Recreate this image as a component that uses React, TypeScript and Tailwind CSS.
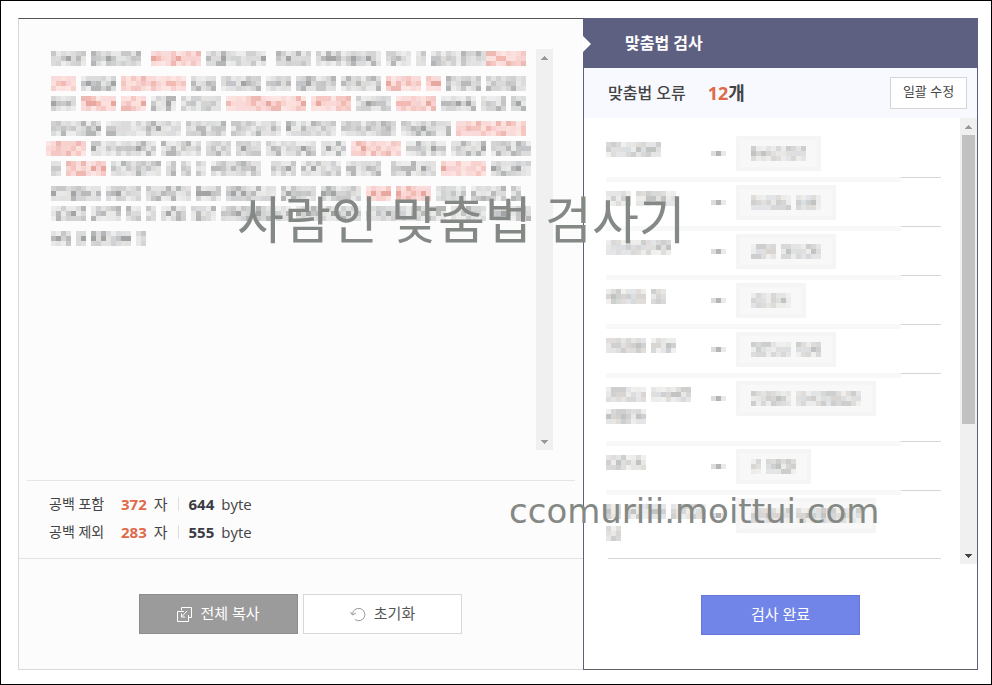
type Run = [start: number, end: number, tone?: "red"]

const CELL = 5

const grays = ["#d9dad9", "#c9cac9", "#e4e4e3", "#b9bab9", "#d2d3d5", "#a3a4a4", "#dedcda", "#c3c5c8", "#e9e9e8"]
const softGrays = ["#e0e0df", "#cfd0d0", "#e8e8e6", "#c2c3c3", "#dcdfe2", "#d8d5d2", "#ececeb"]
const reds = ["#f8d3cf", "#f5c6c1", "#fbe0dc", "#f3bab4", "#f8d2d2", "#e8a79f", "#fbd9d6"]

// top of each censored line and its words, in pixels inside the editor
const editorLines: { y: number; runs: Run[] }[] = [
  {
    y: 5,
    runs: [[5, 40], [45, 95], [105, 155, "red"], [160, 220], [230, 265], [270, 335], [340, 365], [370, 380], [385, 440], [440, 480, "red"]],
  },
  {
    y: 30,
    runs: [[5, 30, "red"], [35, 70], [75, 140, "red"], [145, 170], [175, 215], [220, 245], [250, 290], [295, 335], [340, 375, "red"], [380, 395, "red"], [400, 435], [440, 480]],
  },
  {
    y: 50,
    runs: [[5, 30], [35, 70, "red"], [75, 100, "red"], [105, 130], [135, 175], [180, 260, "red"], [265, 305, "red"], [310, 345], [350, 390, "red"], [395, 430], [435, 460], [465, 480]],
  },
  {
    y: 75,
    runs: [[5, 55], [60, 135], [140, 180], [185, 235], [240, 290], [295, 350], [355, 405], [410, 480, "red"]],
  },
  {
    y: 95,
    runs: [[0, 40, "red"], [45, 110], [115, 155], [160, 185], [190, 215], [220, 270], [275, 300], [305, 355, "red"], [360, 400], [405, 440], [445, 485]],
  },
  {
    y: 115,
    runs: [[5, 15], [20, 60, "red"], [65, 115], [120, 130], [135, 145], [150, 160], [165, 215], [225, 250], [255, 295], [300, 335], [345, 390], [395, 440, "red"], [445, 485]],
  },
  {
    y: 140,
    runs: [[5, 55], [60, 95], [100, 145], [150, 175], [180, 230], [235, 270], [275, 315], [320, 345, "red"], [350, 385, "red"], [390, 420], [425, 460], [465, 475]],
  },
  {
    y: 160,
    runs: [[5, 40], [45, 75], [80, 95], [100, 110], [115, 140], [145, 170], [175, 245], [250, 315], [320, 400], [405, 440], [445, 485]],
  },
  { y: 185, runs: [[5, 25], [30, 40], [45, 85], [90, 100]] },
]

type ErrorRow = { label: Run[][]; pill: number; fix: Run[] }

const errorRows: ErrorRow[] = [
  { label: [[[0, 55]]], pill: 85, fix: [[0, 55]] },
  { label: [[[0, 25], [30, 70]]], pill: 100, fix: [[0, 40], [45, 70]] },
  { label: [[[0, 65]]], pill: 100, fix: [[0, 25], [30, 70]] },
  { label: [[[0, 40], [45, 60]]], pill: 70, fix: [[0, 40]] },
  { label: [[[0, 40], [45, 70]]], pill: 100, fix: [[0, 40], [45, 70]] },
  { label: [[[0, 40], [45, 85]], [[0, 40]]], pill: 140, fix: [[0, 40], [45, 110]] },
  { label: [[[0, 40]]], pill: 75, fix: [[0, 10], [15, 45]] },
  { label: [[[0, 15], [20, 60], [65, 100]], [[0, 15]]], pill: 140, fix: [[0, 40], [45, 110]] },
]

const noise = (x: number, y: number) => {
  const n = Math.sin(x * 12.9898 + y * 78.233) * 43758.5453
  return n - Math.floor(n)
}

function Mosaic({ runs, y, soft, seed = 0 }: { runs: Run[]; y: number; soft?: boolean; seed?: number }) {
  return (
    <g>
      {runs.flatMap(([start, end, tone]) => {
        const palette = tone === "red" ? reds : soft ? softGrays : grays
        const cells = []
        for (let x = start; x < end; x += CELL) {
          for (let row = 0; row < 3; row++) {
            const pick = Math.floor(noise(x + seed, y + row * 7) * palette.length)
            cells.push(
              <rect
                key={`${x}-${row}`}
                x={x}
                y={y + row * CELL}
                width={CELL}
                height={CELL}
                fill={palette[pick]}
                opacity={row === 1 ? 1 : 0.8}
              />
            )
          }
        }
        return cells
      })}
    </g>
  )
}

function Arrow({ down, className }: { down?: boolean; className: string }) {
  return (
    <svg width="17" height="17" viewBox="0 0 17 17" className={className} shapeRendering="crispEdges">
      <path d={down ? "M5 7h7L8.5 11z" : "M5 11h7L8.5 7z"} fill="currentColor" />
    </svg>
  )
}

function CopyIcon() {
  return (
    <svg width="15" height="15" viewBox="0 0 15 15" fill="none" stroke="currentColor">
      <path d="M4.500 3.500V0.500H14.500V10.500H11.500" />
      <path d="M7 4.500H0.500V14.500H11.500V8" />
      <path d="M10 4L5 9.500M4.500 6.500V10H8" />
    </svg>
  )
}

function ResetIcon() {
  return (
    <svg width="16" height="15" viewBox="0 0 16 15" fill="none" stroke="currentColor">
      <path d="M2.500 7.500A6.200 6.200 0 1 1 5 12.500" />
      <path d="M0.500 5L2.500 8L6 6" />
    </svg>
  )
}

function Count({ label, chars, bytes }: { label: string; chars: number; bytes: number }) {
  return (
    <div className="flex h-7 items-center text-[15px] text-[#444]">
      <span className="w-[72px] text-sm">{label}</span>
      <strong className="font-bold text-[#e0694a]">{chars}</strong>
      <span className="ml-[7px]">자</span>
      <span className="mx-[10px] h-[14px] w-px bg-[#ddd]" />
      <strong className="font-bold text-[#3b3b45]">{bytes}</strong>
      <span className="ml-[7px]">byte</span>
    </div>
  )
}

function Editor() {
  return (
    <section className="flex min-w-0 flex-col border-t border-b border-l border-t-[#555] border-b-[#d9d9d9] border-l-[#d9d9d9] bg-[#fcfcfc]">
      <div className="mx-2 flex flex-1 justify-between border-b border-[#e5e5e5] pt-[30px] pr-[22px] pb-[30px] pl-[19px]">
        <svg width="490" height="205" viewBox="0 -3 490 205" className="min-w-0" shapeRendering="crispEdges">
          {editorLines.map((line) => (
            <Mosaic key={line.y} y={line.y - 6} runs={line.runs} />
          ))}
        </svg>
        <div className="flex w-[17px] shrink-0 flex-col justify-between bg-[#f0f0f0] text-[#999]">
          <Arrow className="block" />
          <Arrow down className="block" />
        </div>
      </div>
      <div className="h-[78px] border-b border-[#e2e2e2] pt-[9px] pl-[30px]">
        <Count label="공백 포함" chars={372} bytes={644} />
        <Count label="공백 제외" chars={283} bytes={555} />
      </div>
      <div className="flex h-[110px] justify-center gap-[5px] pt-[35px] pr-px">
        <button type="button" className="flex h-10 w-[159px] items-center justify-center gap-2 border border-[#8d8d8d] bg-[#9b9b9b] pb-[2px] text-[15px] text-white">
          <span className="pt-[2px]">
            <CopyIcon />
          </span>
          전체 복사
        </button>
        <button type="button" className="flex h-10 w-[159px] items-center justify-center gap-2 border border-[#d8d8d8] bg-white pb-[2px] text-[15px] text-[#555]">
          <span className="pt-[2px] text-[#999]">
            <ResetIcon />
          </span>
          초기화
        </button>
      </div>
    </section>
  )
}

function ErrorItem({ row, index }: { row: ErrorRow; index: number }) {
  const last = index === errorRows.length - 1
  const tall = row.label.length > 1
  return (
    <li>
      <div className={tall ? "flex h-[67px]" : "flex h-12"}>
        <svg width="130" height="50" className="shrink-0" shapeRendering="crispEdges">
          {row.label.map((runs, i) => (
            <Mosaic key={i} y={13 + i * 22} runs={runs} seed={index * 31} soft />
          ))}
          <rect x="105" y="22" width="5" height="5" fill="#dcdcdc" />
          <rect x="110" y="22" width="5" height="5" fill="#b5b5b5" />
          <rect x="115" y="22" width="5" height="5" fill="#eaeaea" />
        </svg>
        <div
          className="mt-[7px] h-[35px] border-4 border-[#f5f5f5] bg-[#f8f8f8] pt-[6px] pl-[11px]"
          style={{ width: row.pill }}
        >
          <svg width="110" height="15" className="max-w-full" shapeRendering="crispEdges">
            <Mosaic y={0} runs={row.fix} seed={index * 17 + 3} soft />
          </svg>
        </div>
      </div>
      {last ? (
        <div className="ml-[2px] h-px bg-[#d5d5d5]" />
      ) : (
        <div className="flex h-px">
          <div className="h-[5px] flex-1 bg-[#f8f8f8]" />
          <div className="w-10 bg-[#d5d5d5]" />
        </div>
      )}
    </li>
  )
}

function ErrorPanel() {
  return (
    <section className="flex flex-col border border-[#5c607f] border-b-[#606068] bg-white">
      <header className="relative -mx-px -mt-px flex h-[50px] items-center bg-[#5d6080] pl-[42px]">
        <svg width="8" height="16" viewBox="0 0 8 16" className="absolute top-[18px] left-0">
          <path d="M0 0L8 8L0 16z" fill="#fff" />
        </svg>
        <h2 className="text-base font-bold text-white">맞춤법 검사</h2>
      </header>
      <div className="flex h-[50px] items-center bg-[#f8f9fe] pr-[10px] pl-6">
        <h3 className="text-base font-medium text-[#444]">맞춤법 오류</h3>
        <p className="ml-[22px] text-lg font-bold text-[#444]">
          <span className="text-[#e0694a]">12</span>개
        </p>
        <button type="button" className="ml-auto h-8 w-[77px] border border-[#d5d5d8] bg-white pb-[2px] text-[13px] text-[#444]">
          일괄 수정
        </button>
      </div>
      <div className="flex h-[446px]">
        <ul className="flex-1 pt-[11px] pr-[19px] pl-[22px]">
          {errorRows.map((row, i) => (
            <ErrorItem key={i} row={row} index={i} />
          ))}
        </ul>
        <div className="flex w-[17px] flex-col items-center bg-[#f0f0f0] text-[#999]">
          <Arrow className="block" />
          <div className="h-[289px] w-[13px] bg-[#c1c1c1]" />
          <Arrow down className="mt-auto block text-[#444]" />
        </div>
      </div>
      <div className="flex flex-1 justify-center pt-[31px]">
        <button type="button" className="h-10 w-[159px] border border-[#6678d6] bg-[#7185e8] pb-[2px] text-[15px] text-white">
          검사 완료
        </button>
      </div>
    </section>
  )
}

export default function App() {
  return (
    <div className="relative flex min-h-screen flex-col border border-black bg-white pt-[17px] pr-[13px] pb-[14px] pl-[17px] font-['Open_Sans','Noto_Sans_CJK_KR',sans-serif]">
      <main className="grid flex-1 grid-cols-[minmax(0,1fr)_395px]">
        <Editor />
        <ErrorPanel />
      </main>
      <p className="pointer-events-none absolute top-[182px] left-[236px] text-[51px] leading-[72px] whitespace-nowrap text-[#858985]">
        사람인 맞춤법 검사기
      </p>
      <p className="pointer-events-none absolute top-[490px] left-[508px] font-['DejaVu_Sans',sans-serif] text-[34px] leading-10 whitespace-nowrap text-[#858985]">
        ccomuriii.moittui.com
      </p>
    </div>
  )
}
